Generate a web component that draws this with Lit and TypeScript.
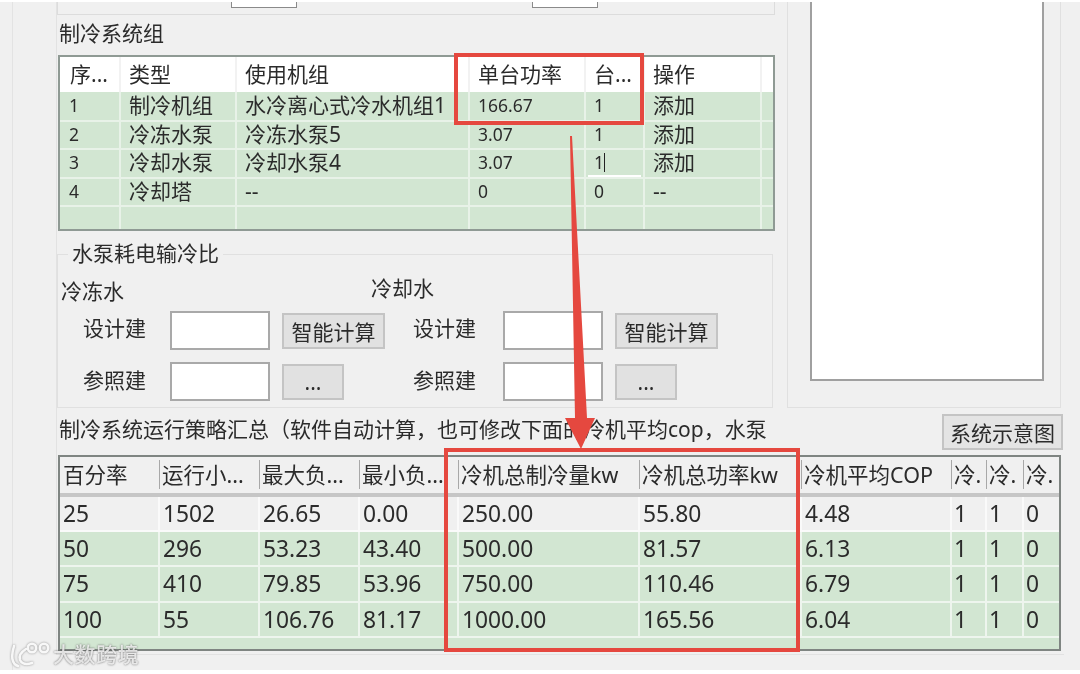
import { LitElement, html, css } from 'lit';
import { customElement } from 'lit/decorators.js';

const topCols = [60, 116, 233, 116, 59, 117, 15];
const topHead = ['序...', '类型', '使用机组', '单台功率', '台...', '操作', ''];
const topRows = [
  ['1', '制冷机组', '水冷离心式冷水机组1', '166.67', '1', '添加', ''],
  ['2', '冷冻水泵', '冷冻水泵5', '3.07', '1', '添加', ''],
  ['3', '冷却水泵', '冷却水泵4', '3.07', '1', '添加', ''],
  ['4', '冷却塔', '--', '0', '0', '--', ''],
  ['', '', '', '', '', '', ''],
];

const sumCols = [99, 100, 100, 99, 181, 162, 150, 35, 37, 38];
const sumHead = ['百分率', '运行小...', '最大负...', '最小负...', '冷机总制冷量kw', '冷机总功率kw', '冷机平均COP', '冷.', '冷.', '冷.'];
const sumRows = [
  ['25', '1502', '26.65', '0.00', '250.00', '55.80', '4.48', '1', '1', '0'],
  ['50', '296', '53.23', '43.40', '500.00', '81.57', '6.13', '1', '1', '0'],
  ['75', '410', '79.85', '53.96', '750.00', '110.46', '6.79', '1', '1', '0'],
  ['100', '55', '106.76', '81.17', '1000.00', '165.56', '6.04', '1', '1', '0'],
];

@customElement('app-root')
export class AppRoot extends LitElement {
  static styles = css`
    :host {
      display: block;
      width: 1080px;
      height: 674px;
      overflow: hidden;
      background: #fff;
      font-family: "Noto Sans", "Noto Sans CJK SC", sans-serif;
      color: #2b2b2b;
    }
    .stage { position: relative; height: 674px; filter: blur(0.35px); }
    .window {
      height: 668px;
      margin-top: 2px;
      background: #f0f0f0;
      box-sizing: border-box;
      padding-left: 56px;
      background-image: linear-gradient(#e3e3e3, #e3e3e3);
      background-size: 1px 100%;
      background-position: 12px 0;
      background-repeat: no-repeat;
    }
    .frame {
      width: 1008px;
      height: 653px;
      box-sizing: border-box;
      border-left: 1px solid #e2e2e2;
      border-bottom: 1px solid #e2e2e2;
    }
    .upper { display: flex; height: 412px; }
    .left { width: 718px; }
    .top-box {
      height: 13px;
      box-sizing: border-box;
      border: 1px solid #dcdcdc;
      border-top: 0;
      display: flex;
      padding-left: 173px;
    }
    .stub {
      width: 66px;
      height: 6px;
      box-sizing: border-box;
      background: #fff;
      border: 1px solid #8a8a8a;
      border-top: 0;
    }
    .stub + .stub { margin-left: 235px; }
    .title { font-size: 21px; line-height: 26px; margin: 5px 0 9px 2px; height: 26px; }

    table { border-collapse: collapse; table-layout: fixed; }
    td, th { padding: 0; font-weight: 400; text-align: left; white-space: nowrap; overflow: hidden; }

    .grid-top {
      width: 717px;
      height: 176px;
      margin-left: 1px;
      box-sizing: border-box;
      border: 2px solid #8f9a94;
      background: #d2e6d2;
      overflow: hidden;
    }
    .grid-top table { width: 716px; }
    .grid-top th {
      height: 35px;
      background: #fff;
      font-size: 21px;
      padding: 0 0 3px 8px;
      border-right: 2px solid #f2f2f2;
      box-sizing: border-box;
    }
    .grid-top th:first-child { padding-left: 10px; }
    .grid-top td {
      height: 28.5px;
      font-size: 21px;
      padding: 0 0 2px 8px;
      border-right: 2px solid #e8f2e8;
      border-bottom: 2px solid #e8f2e8;
      box-sizing: border-box;
      line-height: 24px;
    }
    .grid-top td.num { font-size: 17.5px; }
    .grid-top td.num:first-child { padding-left: 9px; }
    .editing { position: relative; }
    .editing::before {
      content: "";
      position: absolute;
      left: 2px;
      right: 2px;
      bottom: 0;
      height: 2px;
      background: #fff;
    }
    .caret { display: inline-block; width: 1px; height: 19px; background: #222; vertical-align: -3px; }

    .pump {
      width: 716px;
      height: 154px;
      margin-top: 23px;
      box-sizing: border-box;
      border: 1px solid #e0e0e0;
      position: relative;
    }
    .pump-title {
      position: absolute;
      left: 10px;
      top: -15px;
      padding: 0 4px;
      font-size: 21px;
      line-height: 26px;
      background: #f0f0f0;
    }
    .pump-cols { display: flex; padding-top: 23px; }
    .pump-col { width: 311px; margin-left: 3px; }
    .pump-col + .pump-col { margin-left: -1px; width: 400px; }
    .pump-head { font-size: 21px; line-height: 26px; height: 33px; }
    .pump-col + .pump-col .pump-head { position: relative; top: -3px; }
    .form-row { display: flex; align-items: center; height: 39px; }
    .form-row + .form-row { margin-top: 12px; }
    .form-row > * { flex: none; }
    .form-row label { font-size: 21px; width: 109px; padding: 0 0 7px 22px; box-sizing: border-box; }
    .form-row + .form-row label { padding-bottom: 5px; }
    .pump-col + .pump-col .form-row label { padding-left: 42px; width: 132px; }
    .field {
      width: 100px;
      height: 39px;
      box-sizing: border-box;
      background: #fff;
      border: 2px solid #a9a9a9;
    }
    button {
      font: inherit;
      color: inherit;
      font-size: 21px;
      margin-left: 12px;
      padding: 0;
      background: #e1e1e1;
      border: 2px solid #c4c4c4;
      height: 36px;
      box-sizing: border-box;
    }
    .calc { width: 103px; }
    .more { width: 62px; line-height: 20px; }

    .right { width: 274px; margin-left: 12px; }
    .preview-box {
      height: 406px;
      box-sizing: border-box;
      border: 1px solid #e0e0e0;
      border-top: 0;
      padding: 0 16px 0 22px;
    }
    .preview {
      height: 379px;
      box-sizing: border-box;
      background: #fff;
      border: 2px solid #a0a0a0;
      border-top: 0;
    }

    .strategy { display: flex; align-items: center; justify-content: space-between; height: 36px; width: 1006px; }
    .strategy span { font-size: 21px; margin: 0 0 9px 2px; white-space: nowrap; }
    .strategy button { margin: 0; width: 121px; height: 36px; font-size: 21px; background: #e4e4e4; }

    .grid-sum {
      width: 1003px;
      height: 196px;
      margin: 5px 0 0 1px;
      box-sizing: border-box;
      border: 2px solid #7f8582;
      background: #d2e6d2;
      overflow: hidden;
    }
    .grid-sum table { width: 1001px; }
    .grid-sum th {
      height: 38px;
      background: #f0f0f0;
      font-size: 21.5px;
      padding: 0 0 3px 3px;
      box-sizing: border-box;
      border-bottom: 4px solid #c6c6c6;
      position: relative;
    }
    .grid-sum th:not(:first-child)::before {
      content: "";
      position: absolute;
      left: 0;
      top: 3px;
      bottom: 4px;
      width: 1px;
      background: #a8a8a8;
    }
    .grid-sum td {
      height: 35.5px;
      font-size: 22.8px;
      line-height: 30px;
      padding: 1px 0 0 3px;
      box-sizing: border-box;
      border-right: 2px solid #eef5ee;
      border-bottom: 2px solid #eef5ee;
    }
    .grid-sum tr.plain td { background: #f0f0f0; border-color: #fafafa; }
    .grid-sum td.flag { padding-left: 2px; }

    .mark { position: absolute; box-sizing: border-box; border: 4px solid #e5483f; }
    .mark-top { left: 454px; top: 51px; width: 190px; height: 72px; }
    .mark-sum { left: 444px; top: 446px; width: 356px; height: 204px; }
    .arrow { position: absolute; left: 0; top: 0; }
    .watermark {
      position: absolute;
      left: 10px;
      top: 638px;
      display: flex;
      align-items: center;
      color: rgba(255, 255, 255, 0.8);
      text-shadow: 0 0 2px rgba(70, 70, 70, 0.9);
    }
    .watermark svg { filter: drop-shadow(0 0 1px rgba(90, 90, 90, 0.7)); }
    .watermark span { font-size: 21px; line-height: 26px; margin-left: 1px; font-weight: 500; letter-spacing: 0.6px; }
  `;

  private renderTop() {
    return html`<div class="grid-top"><table>
      <colgroup>${topCols.map((w) => html`<col style="width:${w}px" />`)}</colgroup>
      <tr>${topHead.map((h) => html`<th>${h}</th>`)}</tr>
      ${topRows.map((row, r) => html`<tr>
        ${row.map((c, i) => {
          if (r === 2 && i === 4) return html`<td class="num editing">${c}<i class="caret"></i></td>`;
          return html`<td class=${i === 0 || i === 3 || i === 4 ? 'num' : ''}>${c}</td>`;
        })}
      </tr>`)}
    </table></div>`;
  }

  private renderPump(title: string) {
    return html`<div class="pump-col">
      <div class="pump-head">${title}</div>
      <div class="form-row"><label>设计建</label><div class="field"></div><button class="calc">智能计算</button></div>
      <div class="form-row"><label>参照建</label><div class="field"></div><button class="more">...</button></div>
    </div>`;
  }

  private renderSummary() {
    return html`<div class="grid-sum"><table>
      <colgroup>${sumCols.map((w) => html`<col style="width:${w}px" />`)}</colgroup>
      <tr>${sumHead.map((h) => html`<th>${h}</th>`)}</tr>
      ${sumRows.map((row, r) => html`<tr class=${r === 0 ? 'plain' : ''}>
        ${row.map((c, i) => html`<td class=${i > 6 ? 'flag' : ''}>${c}</td>`)}
      </tr>`)}
    </table></div>`;
  }

  render() {
    return html`<div class="stage">
      <div class="window">
        <div class="frame">
          <div class="upper">
            <div class="left">
              <div class="top-box"><div class="stub"></div><div class="stub"></div></div>
              <div class="title">制冷系统组</div>
              ${this.renderTop()}
              <div class="pump">
                <div class="pump-title">水泵耗电输冷比</div>
                <div class="pump-cols">${this.renderPump('冷冻水')}${this.renderPump('冷却水')}</div>
              </div>
            </div>
            <div class="right">
              <div class="preview-box"><div class="preview"></div></div>
            </div>
          </div>
          <div class="strategy">
            <span>制冷系统运行策略汇总（软件自动计算，也可修改下面的冷机平均cop，水泵</span>
            <button>系统示意图</button>
          </div>
          ${this.renderSummary()}
        </div>
      </div>
      <div class="mark mark-top"></div>
      <div class="mark mark-sum"></div>
      <svg class="arrow" width="1080" height="674" viewBox="0 0 1080 674">
        <path d="M570 134 L572 134 L587 416 L595 416 L581 447 L565 416 L575 416 Z" fill="#e5483f" />
      </svg>
      <div class="watermark">
        <svg width="42" height="28" viewBox="0 0 42 28" fill="none" stroke="rgba(255,255,255,.9)" stroke-width="2.6" stroke-linecap="round">
          <path d="M4 6 Q1 16 3 21 Q4 25 8 26" />
          <path d="M16 9 Q8 14 10 20 Q13 26 22 23" />
          <circle cx="22" cy="8" r="4.2" />
          <circle cx="34" cy="8" r="4.2" />
        </svg>
        <span>大数跨境</span>
      </div>
    </div>`;
  }
}
